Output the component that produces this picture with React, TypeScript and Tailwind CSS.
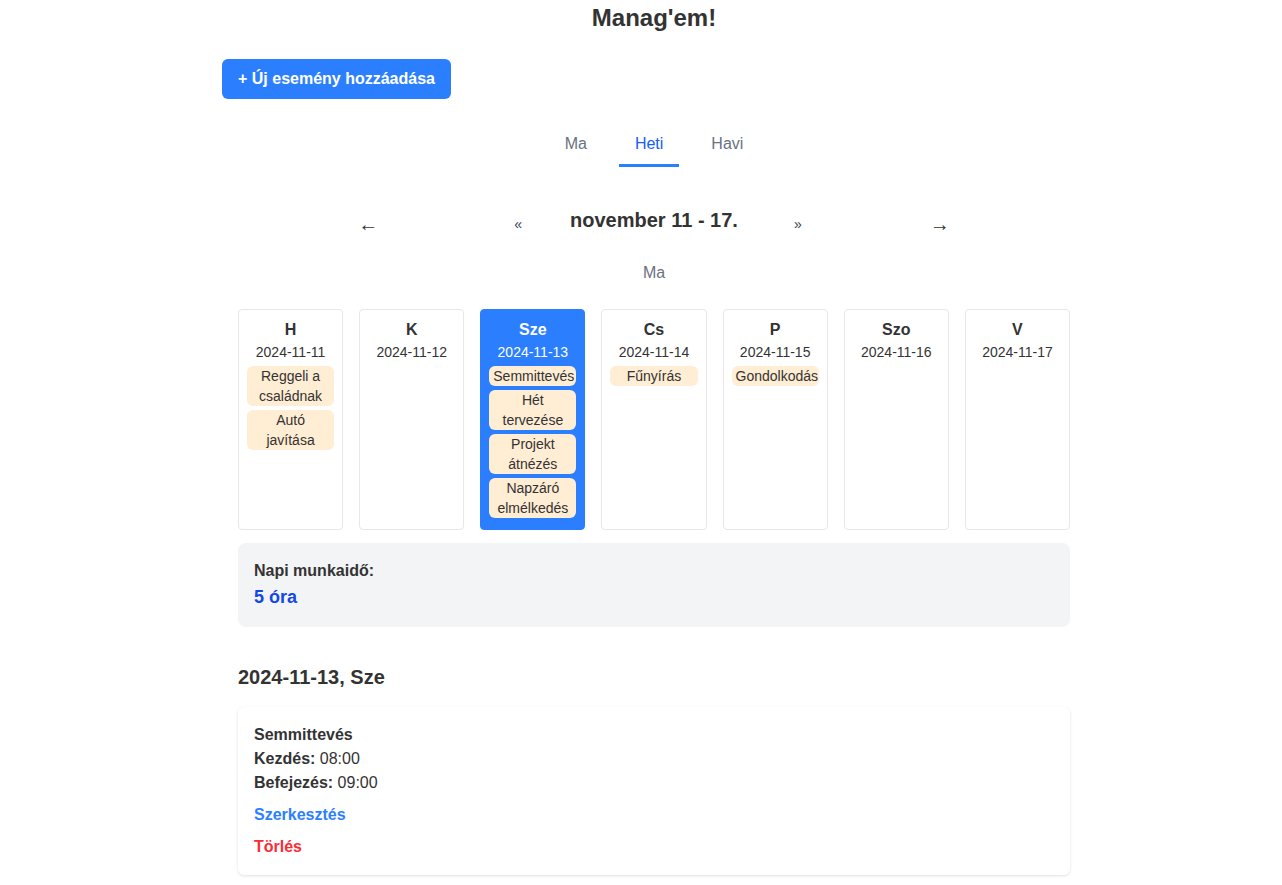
import { useState } from 'react';

// Heti nézet — egy hét napjai kártyákon, alatta a kiválasztott nap eseményei.

type Ev = { title: string; start: string; end: string };

const week: { label: string; date: string; events: Ev[] }[] = [
  {
    label: 'H',
    date: '2024-11-11',
    events: [
      { title: 'Reggeli a családnak', start: '07:00', end: '08:00' },
      { title: 'Autó javítása', start: '10:00', end: '12:00' },
    ],
  },
  { label: 'K', date: '2024-11-12', events: [] },
  {
    label: 'Sze',
    date: '2024-11-13',
    events: [
      { title: 'Semmittevés', start: '08:00', end: '09:00' },
      { title: 'Hét tervezése', start: '09:00', end: '10:00' },
      { title: 'Projekt átnézés', start: '10:00', end: '12:00' },
      { title: 'Napzáró elmélkedés', start: '17:00', end: '18:00' },
    ],
  },
  { label: 'Cs', date: '2024-11-14', events: [{ title: 'Fűnyírás', start: '15:00', end: '16:00' }] },
  { label: 'P', date: '2024-11-15', events: [{ title: 'Gondolkodás', start: '14:00', end: '15:00' }] },
  { label: 'Szo', date: '2024-11-16', events: [] },
  { label: 'V', date: '2024-11-17', events: [] },
];

const tabs = ['Ma', 'Heti', 'Havi'];

export default function App() {
  const [tab, setTab] = useState('Heti');
  const [selected, setSelected] = useState(2);
  const day = week[selected];

  return (
    <div className="min-h-screen bg-white text-[#333] font-['Liberation_Sans',Arial,sans-serif]">
      <div className="w-[864px] ml-[222px] px-0 pb-2">
        <h1 className="text-center text-[24px] font-bold leading-8 pt-[2px]">Manag&apos;em!</h1>

        <button className="mt-[25px] h-10 px-4 rounded-md bg-blue-500 text-white font-bold text-[16px]">
          + Új esemény hozzáadása
        </button>

        {/* Nézetváltó */}
        <div className="mt-5 flex justify-center gap-4">
          {tabs.map((t) => (
            <button
              key={t}
              onClick={() => setTab(t)}
              className={
                t === tab
                  ? 'px-4 pt-[13px] pb-2 text-[16px] text-blue-600 border-b-[3px] border-blue-500'
                  : 'px-4 pt-[13px] pb-2 text-[16px] text-gray-500 border-b-[3px] border-transparent'
              }
            >
              {t}
            </button>
          ))}
        </div>

        {/* Hét lapozó */}
        <div className="mt-[37px] flex items-center justify-center px-4">
          <button className="text-[20px] leading-none mt-[8px] w-[20px]">←</button>
          <button className="ml-[136px] text-[14px] text-gray-700 mt-[10px]">«</button>
          <h2 className="ml-[48px] mr-[56px] text-[20px] font-bold leading-7">november 11 - 17.</h2>
          <button className="text-[14px] text-gray-700 mt-[10px]">»</button>
          <button className="ml-[128px] text-[20px] leading-none mt-[8px] w-[20px]">→</button>
        </div>
        <div className="mt-[26px] text-center text-[16px] text-gray-500 leading-6">Ma</div>

        {/* Napok */}
        <div className="mx-4 mt-6 grid grid-cols-7 gap-4">
          {week.map((d, i) => {
            const active = i === selected;
            return (
              <div
                key={d.date}
                onClick={() => setSelected(i)}
                className={
                  active
                    ? 'min-h-[221px] rounded border border-blue-500 bg-blue-500 text-white px-2 pt-2 pb-2 text-center cursor-pointer'
                    : 'min-h-[221px] rounded border border-gray-200 bg-white px-2 pt-2 pb-2 text-center cursor-pointer'
                }
              >
                <div className="text-[16px] font-bold leading-6">{d.label}</div>
                <div className="text-[14px] leading-5">{d.date}</div>
                <div className="mt-1 flex flex-col gap-1">
                  {d.events.map((e) => (
                    <div key={e.title} className="rounded-md bg-orange-100 px-1 text-[#333] text-[14px] leading-5">
                      {e.title}
                    </div>
                  ))}
                </div>
              </div>
            );
          })}
        </div>

        {/* Munkaidő */}
        <div className="mx-4 mt-[13px] rounded-lg bg-gray-100 p-4">
          <div className="text-[16px] font-bold leading-6">Napi munkaidő:</div>
          <div className="text-[18px] font-bold leading-7 text-blue-700">5 óra</div>
        </div>

        {/* Kiválasztott nap */}
        <h3 className="mx-4 mt-9 text-[20px] font-bold leading-7">
          {day.date}, {day.label}
        </h3>
        <div className="mx-4 mt-4 flex flex-col gap-3">
          {day.events.map((e) => (
            <div key={e.title} className="rounded-md bg-white shadow-[0_1px_3px_rgba(0,0,0,0.12)] p-4">
              <div className="text-[16px] font-bold leading-6">{e.title}</div>
              <div className="text-[16px] leading-6">
                <b>Kezdés:</b> {e.start}
              </div>
              <div className="text-[16px] leading-6">
                <b>Befejezés:</b> {e.end}
              </div>
              <button className="block mt-2 text-[16px] font-bold leading-6 text-blue-500">Szerkesztés</button>
              <button className="block mt-2 text-[16px] font-bold leading-6 text-red-500">Törlés</button>
            </div>
          ))}
        </div>
      </div>
    </div>
  );
}
